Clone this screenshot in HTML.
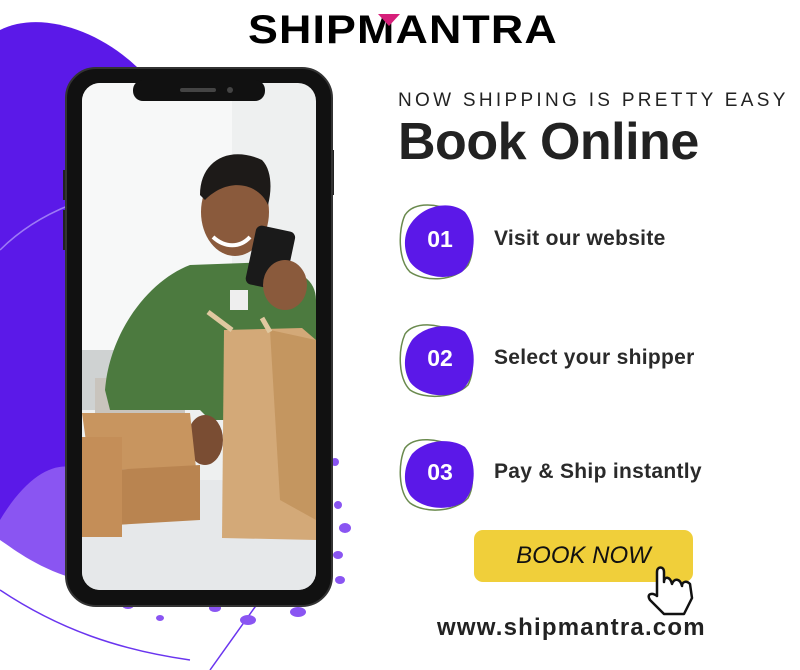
<!DOCTYPE html>
<html><head><meta charset="utf-8"><style>
*{margin:0;padding:0;box-sizing:border-box}
body{width:800px;height:670px;background:#fff;position:relative;overflow:hidden;font-family:"Liberation Sans",sans-serif}
.abs{position:absolute}
.logo{left:248px;top:8px;font-size:40px;font-weight:900;letter-spacing:1px;color:#000;transform:scaleX(1.12);transform-origin:left}
.tag{left:398px;top:90px;font-size:19px;letter-spacing:3.3px;color:#222}
.h1{left:398px;top:112px;font-size:52px;font-weight:bold;color:#222;letter-spacing:-0.5px}
.step{left:494px;font-size:21px;font-weight:bold;color:#2a2a2a;letter-spacing:0.3px}
.num{font-size:23px;font-weight:bold;color:#fff;width:60px;text-align:center}
.btn{left:474px;top:530px;width:219px;height:52px;background:#f0cf3a;border-radius:9px;font-size:24px;font-style:italic;color:#111;text-align:center;line-height:52px}
.url{left:437px;top:614px;font-size:24px;font-weight:bold;color:#222;letter-spacing:1.2px}
</style></head><body>
<svg class="abs" style="left:0;top:0" width="800" height="670">
 <path d="M0 30 C40 10 100 30 140 70 L80 560 C40 560 10 540 0 520 Z" fill="#5b19e8"/>
 <path d="M0 520 C30 470 60 460 80 470 L80 580 C40 570 15 550 0 540 Z" fill="#8a55f2"/>
 <path d="M0 250 C20 230 45 215 70 205" stroke="#9d7af5" stroke-width="1.5" fill="none"/>
 <path d="M0 590 C60 630 120 650 190 660" stroke="#6a35ef" stroke-width="1.5" fill="none"/>
 <path d="M210 670 L260 600" stroke="#6a35ef" stroke-width="1.5"/>
 <g fill="#8a55f2">
  <ellipse cx="345" cy="528" rx="6" ry="5"/><ellipse cx="338" cy="505" rx="4" ry="4"/><ellipse cx="338" cy="555" rx="5" ry="4"/><ellipse cx="340" cy="580" rx="5" ry="4"/>
  <ellipse cx="298" cy="612" rx="8" ry="5"/><ellipse cx="248" cy="620" rx="8" ry="5"/><ellipse cx="215" cy="608" rx="6" ry="4"/><ellipse cx="160" cy="618" rx="4" ry="3"/><ellipse cx="128" cy="605" rx="6" ry="4"/><ellipse cx="335" cy="462" rx="4" ry="4"/>
 </g>
 <rect x="63" y="170" width="4" height="30" fill="#222"/><rect x="63" y="210" width="4" height="40" fill="#222"/><rect x="330" y="150" width="4" height="45" fill="#222"/>
 <rect x="66" y="68" width="266" height="538" rx="30" fill="#111" stroke="#333" stroke-width="2"/>
 <clipPath id="sc"><rect x="82" y="83" width="234" height="507" rx="18"/></clipPath>
 <g clip-path="url(#sc)">
  <rect x="82" y="83" width="234" height="507" fill="#eef0f0"/>
  <rect x="82" y="83" width="150" height="270" fill="#f7f8f8"/>
  <rect x="82" y="350" width="60" height="60" fill="#cfd2d2"/>
  <rect x="95" y="378" width="90" height="35" fill="#c9c4bd"/>
  <rect x="82" y="480" width="234" height="110" fill="#e6e8ea"/>
  <path d="M105 390 C110 330 150 280 190 265 L270 262 C300 270 316 280 316 300 L316 420 L210 420 L200 410 C170 410 130 410 110 410 Z" fill="#4c7a3f"/>
  <rect x="230" y="290" width="18" height="20" fill="#eee"/>
  <ellipse cx="235" cy="212" rx="34" ry="44" fill="#8a5a3c"/>
  <path d="M200 195 C200 160 230 145 262 160 C272 170 272 190 268 205 C260 185 230 175 205 200 Z" fill="#1d1a18"/>
  <path d="M213 237 C225 248 240 248 250 237" stroke="#fff" stroke-width="4" fill="none"/>
  <rect x="250" y="228" width="40" height="60" rx="6" fill="#1a1a1a" transform="rotate(12 270 260)"/>
  <ellipse cx="285" cy="285" rx="22" ry="25" fill="#8a5a3c"/>
  <ellipse cx="205" cy="440" rx="18" ry="25" fill="#7a4d33"/>
  <polygon points="82,413 190,413 196,468 90,470" fill="#c8955f"/>
  <polygon points="110,470 200,465 200,520 115,525" fill="#b98450"/>
  <rect x="82" y="437" width="40" height="100" fill="#c48e58"/>
  <polygon points="224,330 302,328 316,340 316,540 222,538" fill="#d3a978"/>
  <polygon points="270,330 316,340 316,520 280,500" fill="#c49660"/>
  <path d="M208 312 L232 330 M262 318 L270 332" stroke="#e0c8a0" stroke-width="5"/>
 </g>
 <rect x="133" y="80" width="132" height="21" rx="10" fill="#111"/>
 <rect x="180" y="88" width="36" height="4" rx="2" fill="#444"/><circle cx="230" cy="90" r="3" fill="#444"/>
 <g>
  <path d="M405 215 C415 200 440 205 450 210 C470 218 478 245 468 265 C455 282 425 282 410 272 C398 260 398 230 405 215Z" fill="none" stroke="#6a8a4e" stroke-width="1.5"/>
  <path d="M412 222 C425 205 450 200 465 212 C478 228 476 258 462 272 C445 282 420 276 410 262 C402 248 404 232 412 222Z" fill="#5b18e8"/>
  <path d="M405 334 C415 320 440 325 450 330 C470 338 478 365 468 385 C455 398 425 400 410 390 C398 378 398 350 405 334Z" fill="none" stroke="#6a8a4e" stroke-width="1.5"/>
  <path d="M412 340 C425 325 450 322 465 332 C478 348 476 378 462 390 C445 400 420 395 410 382 C402 368 404 352 412 340Z" fill="#5b18e8"/>
  <path d="M405 448 C415 435 440 440 450 445 C470 452 478 480 468 498 C455 512 425 514 410 503 C398 492 398 462 405 448Z" fill="none" stroke="#6a8a4e" stroke-width="1.5"/>
  <path d="M412 454 C425 440 450 437 465 447 C478 462 476 492 462 503 C445 512 420 508 410 495 C402 482 404 466 412 454Z" fill="#5b18e8"/>
 </g>
</svg>
<div class="abs logo">SHIPMANTRA</div>
<svg class="abs" style="left:378px;top:14px" width="22" height="12"><polygon points="0,0 22,0 11,12" fill="#d61f7a"/></svg>
<div class="abs tag">NOW SHIPPING IS PRETTY EASY</div>
<div class="abs h1">Book Online</div>
<div class="abs num" style="left:410px;top:226px">01</div>
<div class="abs num" style="left:410px;top:345px">02</div>
<div class="abs num" style="left:410px;top:459px">03</div>
<div class="abs step" style="top:227px">Visit our website</div>
<div class="abs step" style="top:346px">Select your shipper</div>
<div class="abs step" style="top:460px">Pay &amp; Ship instantly</div>
<div class="abs btn">BOOK NOW</div>
<svg class="abs" style="left:645px;top:565px" width="52" height="52"><path d="M12 13 L12 31 C7 27 1 29 5 35 L19 49 L39 49 L47 33 L45 19 C41 15 37 17 37 21 C35 13 29 13 27 19 C25 11 19 11 19 17 L19 7 C19 1 12 1 12 7 Z" fill="#fff" stroke="#111" stroke-width="2.5" stroke-linejoin="round"/></svg>
<div class="abs url">www.shipmantra.com</div>
</body></html>
